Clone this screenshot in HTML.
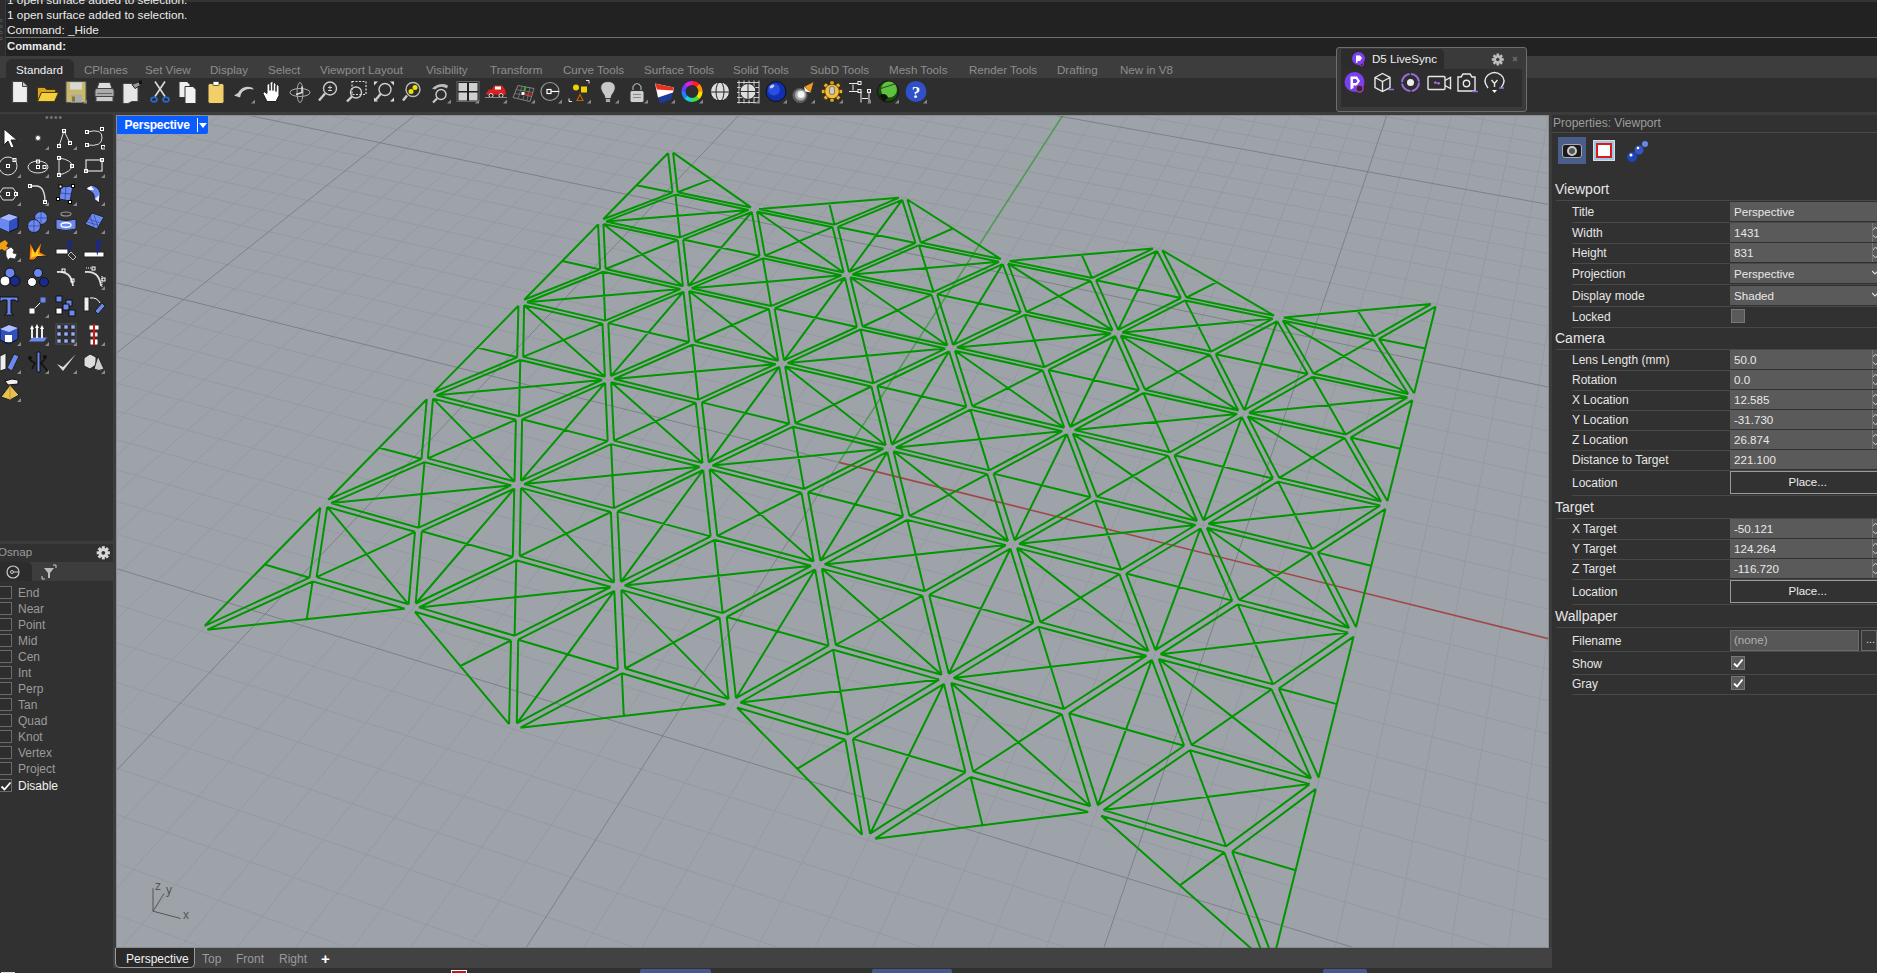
<!DOCTYPE html>
<html><head><meta charset="utf-8">
<style>
*{box-sizing:border-box;margin:0;padding:0}
html,body{width:1877px;height:973px;overflow:hidden;background:#313131;font-family:"Liberation Sans",sans-serif;position:relative}
.a{position:absolute}
.t{position:absolute;white-space:nowrap;line-height:1}
#cmd{left:0;top:0;width:1877px;height:56px;background:#222222}
#cmdstrip{left:0;top:0;width:5px;height:56px;background:#2c2c2c}
.cl{font-size:11.8px;color:#ececec;left:7px}
#tabrow{left:0;top:56px;width:1877px;height:22px;background:#3d3d3d}
#iconrow{left:0;top:78px;width:1877px;height:34px;background:#2e2e2e}
.tab{font-size:11.6px;color:#8e8e8e;top:63.5px}
#strip{left:0;top:112px;width:1877px;height:3px;background:#3c3c3c}
#lp{left:0;top:114px;width:113px;height:859px;background:#313131;border-top-right-radius:5px}
#rp{left:1552px;top:115px;width:325px;height:858px;background:#313131;border-top-left-radius:4px}
.pl{font-size:12px;color:#e6e6e6;left:1572px}
.ps{font-size:14px;color:#e6e6e6;left:1555px}
.pv{left:1730px;width:147px;height:18px;background:#5a5a5a}
.pvt{font-size:11.6px;color:#e8e8e8;left:1734px}
.sep{left:1572px;width:305px;height:1px;background:#484848}
.ssep{left:1556px;width:321px;height:1px;background:#484848}
.os{font-size:12px;color:#9b9b9b;left:18px}
.cb{left:-1px;width:13px;height:13px;border:1px solid #6b6b6b;background:#2e2e2e}
</style></head><body>
<!-- command area -->
<div class="a" id="cmd"></div>
<div class="a" id="cmdstrip"></div>
<div class="a" style="left:5px;top:0;width:1px;height:56px;background:#3a3a3a"></div>
<div class="a" style="left:6px;top:0;width:1871px;height:2px;background:#343434"></div>
<svg class="a" style="left:0;top:0" width="6" height="100"><g fill="none" stroke="#5e5e5e" stroke-width="0.8"><circle cx="1" cy="20.5" r="1.3"/><circle cx="1" cy="26.5" r="1.3"/><circle cx="1" cy="32.5" r="1.3"/><circle cx="1" cy="38.5" r="1.3"/><circle cx="1" cy="76.5" r="1.3"/><circle cx="1" cy="82.5" r="1.3"/><circle cx="1" cy="88.5" r="1.3"/><circle cx="1" cy="94.5" r="1.3"/></g></svg>
<div class="t cl" style="top:-4.8px">1 open surface added to selection.</div>
<div class="t cl" style="top:9.8px">1 open surface added to selection.</div>
<div class="t cl" style="top:24.8px">Command: _Hide</div>
<div class="a" style="left:6px;top:37px;width:1871px;height:1px;background:#707070"></div>
<div class="t cl" style="top:40.5px;font-weight:bold;font-size:11.3px">Command:</div>
<!-- tabs -->
<div class="a" id="tabrow"></div>
<div class="a" style="left:6px;top:59px;width:68px;height:19px;background:#2d2d2d;border-top-left-radius:6px;border-top-right-radius:6px"></div>
<div class="t tab" style="left:16px;color:#f0f0f0">Standard</div>
<div class="t tab" style="left:84px">CPlanes</div>
<div class="t tab" style="left:145px">Set View</div>
<div class="t tab" style="left:210px">Display</div>
<div class="t tab" style="left:268px">Select</div>
<div class="t tab" style="left:320px">Viewport Layout</div>
<div class="t tab" style="left:426px">Visibility</div>
<div class="t tab" style="left:490px">Transform</div>
<div class="t tab" style="left:563px">Curve Tools</div>
<div class="t tab" style="left:644px">Surface Tools</div>
<div class="t tab" style="left:733px">Solid Tools</div>
<div class="t tab" style="left:810px">SubD Tools</div>
<div class="t tab" style="left:889px">Mesh Tools</div>
<div class="t tab" style="left:969px">Render Tools</div>
<div class="t tab" style="left:1057px">Drafting</div>
<div class="t tab" style="left:1120px">New in V8</div>
<div class="a" id="iconrow"></div>
<svg class="a" style="left:0;top:78px" width="940" height="34"><g transform="translate(7.5,1.5)"><path d="M5 2H15L20 7V23H5Z" fill="#eee" stroke="#444" stroke-width="1.2"/><path d="M15 2V7H20" fill="#ccc" stroke="#444" stroke-width="1"/></g><g transform="translate(35.5,1.5)"><path d="M2 8H9L11 10H20V13H6L2 22Z" fill="#d9a520" stroke="#3a3000" stroke-width="0.8"/><path d="M6 13H23L19 22H2Z" fill="#f4cf40" stroke="#3a3000" stroke-width="0.8"/></g><g transform="translate(64,1.5)"><rect x="2" y="2" width="20" height="21" rx="1" fill="#c9b86a" stroke="#555" stroke-width="1"/><rect x="6" y="3" width="12" height="7" fill="#d8d8d8"/><rect x="7" y="15" width="11" height="8" fill="#aaa"/><rect x="8" y="17" width="3" height="5" fill="#8a7a30"/><path d="M19 24L23 20L23 24Z" fill="#8a8a8a"/></g><g transform="translate(92,1.5)"><path d="M7 3H18L20 9H5Z" fill="#ddd" stroke="#444"/><rect x="3" y="9" width="19" height="9" rx="2" fill="#aaa" stroke="#444"/><rect x="4" y="17" width="17" height="5" fill="#ccc" stroke="#444"/><path d="M5 14H20" stroke="#666"/></g><g transform="translate(120,1.5)"><path d="M3 4H15L18 7V22H12L8 24H3Z" fill="#e6e6e6" stroke="#444"/><path d="M12 5L20 2L22 5L15 9Z" fill="#999" stroke="#222"/><rect x="19" y="1" width="3" height="4" fill="#111"/></g><g transform="translate(148,1.5)"><path d="M7 2L17 17M17 2L7 17" stroke="#ddd" stroke-width="1.6"/><ellipse cx="6" cy="20" rx="3" ry="2.3" fill="none" stroke="#2a6ad8" stroke-width="1.6"/><ellipse cx="18" cy="20" rx="3" ry="2.3" fill="none" stroke="#2a6ad8" stroke-width="1.6"/></g><g transform="translate(176,1.5)"><path d="M3 2H11L14 5V18H3Z" fill="#eee" stroke="#333"/><path d="M9 7H17L20 10V24H9Z" fill="#f2f2f2" stroke="#333"/></g><g transform="translate(204,1.5)"><rect x="4" y="4" width="16" height="20" rx="2" fill="#f3cf6a" stroke="#333"/><rect x="9" y="2" width="6" height="4" rx="1" fill="#fff" stroke="#333" stroke-width="0.8"/></g><g transform="translate(232,1.5)"><path d="M6 14Q10 5 20 8L22 10Q13 8 9 14Z" fill="#ccc"/><path d="M2 16L10 11L8 18Z" fill="#ccc"/><path d="M19 24L23 20L23 24Z" fill="#8a8a8a"/></g><g transform="translate(260,1.5)"><path d="M7 22L3 14L4 12L7 14V5L9 4L10 5V11V3L12 2L13 3V11V4L15 3L16 5V12V6L18 5L19 7V16L16 22Z" fill="#fff" stroke="#222" stroke-width="1"/></g><g transform="translate(288,1.5)"><ellipse cx="12" cy="13" rx="10" ry="4" fill="none" stroke="#aaa" stroke-width="1"/><ellipse cx="12" cy="13" rx="3" ry="10" fill="none" stroke="#aaa" stroke-width="1"/><path d="M14 7L14 13L8 15" stroke="#ddd" stroke-width="1.6" fill="none"/></g><g transform="translate(316,1.5)"><circle cx="14" cy="9" r="6.5" fill="none" stroke="#ccc" stroke-width="1.4"/><path d="M9 14L3 21" stroke="#ccc" stroke-width="2.4"/><path d="M12 8H16M14 6V10M12 11H16" stroke="#ccc" stroke-width="1"/></g><g transform="translate(344,1.5)"><rect x="8" y="2" width="14" height="13" fill="none" stroke="#ddd" stroke-width="1.2" stroke-dasharray="2 1.5"/><circle cx="12" cy="13" r="5.5" fill="none" stroke="#ccc" stroke-width="1.4"/><path d="M8 17L3 22" stroke="#ccc" stroke-width="2.4"/></g><g transform="translate(372,1.5)"><path d="M2 2H6L2 6ZM22 2H18L22 6ZM2 22H6L2 18ZM22 22H18L22 18Z" fill="#ddd"/><circle cx="13" cy="10" r="6" fill="none" stroke="#ccc" stroke-width="1.4"/><path d="M9 14L4 20" stroke="#ccc" stroke-width="2.4"/></g><g transform="translate(400,1.5)"><circle cx="13" cy="10" r="7" fill="none" stroke="#bbb" stroke-width="1.4"/><circle cx="15" cy="8" r="2.5" fill="#f0e000"/><circle cx="11" cy="12" r="2.5" fill="#f0e000"/><path d="M7 16L3 21" stroke="#ccc" stroke-width="2.4"/></g><g transform="translate(428,1.5)"><path d="M4 9Q12 2 20 6L19 9Q12 5 7 10Z" fill="#bbb"/><circle cx="13" cy="15" r="5" fill="none" stroke="#ccc" stroke-width="1.4"/><path d="M9 19L5 23" stroke="#ccc" stroke-width="2.2"/><path d="M19 24L23 20L23 24Z" fill="#8a8a8a"/></g><g transform="translate(456,1.5)"><rect x="1" y="2" width="22" height="20" fill="#222" stroke="#666"/><rect x="2.5" y="3.5" width="8.5" height="8" fill="#d0d0d0"/><rect x="13" y="3.5" width="8.5" height="8" fill="#d0d0d0"/><rect x="2.5" y="13" width="8.5" height="8" fill="#d0d0d0"/><rect x="13" y="13" width="8.5" height="8" fill="#d0d0d0"/><path d="M19 24L23 20L23 24Z" fill="#8a8a8a"/></g><g transform="translate(484,1.5)"><path d="M2 14L5 10H8L10 6H18L21 10L22 15H2Z" fill="#e02020"/><rect x="11" y="7" width="6" height="3" fill="#fff"/><circle cx="7" cy="16" r="2" fill="#222" stroke="#fff" stroke-width="0.8"/><circle cx="17" cy="16" r="2" fill="#222" stroke="#fff" stroke-width="0.8"/><path d="M1 18H23" stroke="#888"/><path d="M19 24L23 20L23 24Z" fill="#8a8a8a"/></g><g transform="translate(512,1.5)"><path d="M6 6L22 9L18 22L1 18Z" fill="none" stroke="#999" stroke-width="0.8"/><path d="M10 7L6 19M14 7.5L11 20M18 8L15 21M4 10L21 13M3 14L20 17" stroke="#888" stroke-width="0.7"/><rect x="9" y="12" width="4" height="4" fill="#fff" stroke="#333"/><path d="M13 14L20 16" stroke="#e02020" stroke-width="1.4"/><path d="M12 12L13 7" stroke="#20c020" stroke-width="1.4"/><path d="M19 24L23 20L23 24Z" fill="#8a8a8a"/></g><g transform="translate(539,1.5)"><circle cx="11" cy="12" r="9" fill="none" stroke="#999" stroke-width="1.2"/><rect x="8" y="10" width="4" height="4" fill="none" stroke="#fff" stroke-width="1.2"/><path d="M12 12H20" stroke="#fff" stroke-width="1.2"/><path d="M19 24L23 20L23 24Z" fill="#8a8a8a"/></g><g transform="translate(568,1.5)"><circle cx="8" cy="8" r="3" fill="#f0d000"/><rect x="13" y="7" width="6" height="6" fill="#f0d000"/><path d="M9 21L12 15L15 21Z" fill="none" stroke="#c06000" stroke-width="1.2"/><path d="M18 1H21V4M1 19V22H4" stroke="#fff" stroke-width="0.9" fill="none"/><path d="M19 24L23 20L23 24Z" fill="#8a8a8a"/></g><g transform="translate(596,1.5)"><path d="M12 2C6 2 4 6 5 10C6 14 9 15 9 19H15C15 15 18 14 19 10C20 6 18 2 12 2Z" fill="#c8c8c8" stroke="#333"/><rect x="9.5" y="19" width="5" height="4" rx="1" fill="#aaa" stroke="#333"/><path d="M19 24L23 20L23 24Z" fill="#8a8a8a"/></g><g transform="translate(625,1.5)"><path d="M8 11V7Q12 1 16 7V11" fill="none" stroke="#333" stroke-width="2.5"/><path d="M8 11V7Q12 1 16 7V11" fill="none" stroke="#aaa" stroke-width="1.2"/><rect x="5" y="11" width="14" height="12" rx="2" fill="#d0d0d0" stroke="#333"/><path d="M8 15H16M8 18H16" stroke="#888"/><path d="M19 24L23 20L23 24Z" fill="#8a8a8a"/></g><g transform="translate(652,1.5)"><path d="M3 4L22 8L19 20L8 24Z" fill="#1e3a9a"/><path d="M3 4L22 8L21 13L6 18Z" fill="#ffffff"/><path d="M3 4L22 8L21 11L5 10Z" fill="#e83020"/><path d="M3 4L22 8L13 6Z" fill="#f08060"/><path d="M19 24L23 20L23 24Z" fill="#8a8a8a"/></g><g transform="translate(680,1.5)"><path d="M12.00 3.50A8.5 8.5 0 0 1 18.30 6.30" fill="none" stroke="#ff2020" stroke-width="4"/><path d="M18.01 5.99A8.5 8.5 0 0 1 20.49 12.42" fill="none" stroke="#ff9000" stroke-width="4"/><path d="M20.50 12.00A8.5 8.5 0 0 1 17.70 18.30" fill="none" stroke="#ffe000" stroke-width="4"/><path d="M18.01 18.01A8.5 8.5 0 0 1 11.58 20.49" fill="none" stroke="#40e040" stroke-width="4"/><path d="M12.00 20.50A8.5 8.5 0 0 1 5.70 17.70" fill="none" stroke="#20d0d0" stroke-width="4"/><path d="M5.99 18.01A8.5 8.5 0 0 1 3.51 11.58" fill="none" stroke="#2080ff" stroke-width="4"/><path d="M3.50 12.00A8.5 8.5 0 0 1 6.30 5.70" fill="none" stroke="#6040ff" stroke-width="4"/><path d="M5.99 5.99A8.5 8.5 0 0 1 12.42 3.51" fill="none" stroke="#e020e0" stroke-width="4"/><path d="M19 24L23 20L23 24Z" fill="#8a8a8a"/></g><g transform="translate(708,1.5)"><circle cx="12" cy="12" r="9.5" fill="#ddd" stroke="#222" stroke-width="1"/><ellipse cx="12" cy="12" rx="4" ry="9.5" fill="none" stroke="#222" stroke-width="1"/><path d="M2.5 12.5H21.5" stroke="#222"/></g><g transform="translate(736,1.5)"><path d="M1 3H23M1 8H23M1 13H23M1 18H23M1 23H23M3 1V24M8 1V24M13 1V24M18 1V24M23 1V24" stroke="#ddd" stroke-width="0.9"/><circle cx="12" cy="12" r="8" fill="#ddd" stroke="#222"/><path d="M4 12H20M12 4V20" stroke="#333"/><path d="M19 24L23 20L23 24Z" fill="#8a8a8a"/></g><g transform="translate(764,1.5)"><circle cx="12" cy="12" r="10" fill="#1030b0" stroke="#111"/><circle cx="10" cy="10" r="6" fill="#2850e0"/><ellipse cx="8" cy="7" rx="2.5" ry="1.5" fill="#cce" transform="rotate(-30 8 7)"/><path d="M19 24L23 20L23 24Z" fill="#8a8a8a"/></g><g transform="translate(792,1.5)"><circle cx="8" cy="16" r="7.5" fill="#bbb" opacity="0.35"/><circle cx="8.5" cy="15.5" r="5.5" fill="#ddd" opacity="0.6"/><circle cx="9" cy="15" r="3.5" fill="#f4f4f4"/><path d="M12 7L22 2L19 13Z" fill="#f09a20" stroke="#2a2a2a" stroke-width="0.8"/><path d="M12 7L19 13L13 12Z" fill="#fff2d0"/><path d="M19 24L23 20L23 24Z" fill="#8a8a8a"/></g><g transform="translate(820,1.5)"><g transform="translate(12 12)"><rect x="-2" y="-10.5" width="4" height="4.5" rx="0.8" fill="#e8b030" stroke="#3a2a00" stroke-width="0.7" transform="rotate(0)"/><rect x="-2" y="-10.5" width="4" height="4.5" rx="0.8" fill="#e8b030" stroke="#3a2a00" stroke-width="0.7" transform="rotate(45)"/><rect x="-2" y="-10.5" width="4" height="4.5" rx="0.8" fill="#e8b030" stroke="#3a2a00" stroke-width="0.7" transform="rotate(90)"/><rect x="-2" y="-10.5" width="4" height="4.5" rx="0.8" fill="#e8b030" stroke="#3a2a00" stroke-width="0.7" transform="rotate(135)"/><rect x="-2" y="-10.5" width="4" height="4.5" rx="0.8" fill="#e8b030" stroke="#3a2a00" stroke-width="0.7" transform="rotate(180)"/><rect x="-2" y="-10.5" width="4" height="4.5" rx="0.8" fill="#e8b030" stroke="#3a2a00" stroke-width="0.7" transform="rotate(225)"/><rect x="-2" y="-10.5" width="4" height="4.5" rx="0.8" fill="#e8b030" stroke="#3a2a00" stroke-width="0.7" transform="rotate(270)"/><rect x="-2" y="-10.5" width="4" height="4.5" rx="0.8" fill="#e8b030" stroke="#3a2a00" stroke-width="0.7" transform="rotate(315)"/><circle r="7.3" fill="#e8b030" stroke="#3a2a00" stroke-width="0.7"/><circle r="6.3" fill="#f0c040"/><rect x="-2.5" y="-5" width="5" height="8" rx="2" fill="#c8c8c8" stroke="#444" stroke-width="0.6"/></g><path d="M19 24L23 20L23 24Z" fill="#8a8a8a"/></g><g transform="translate(848,1.5)"><path d="M1 4H10M1 12H10M5 5V11M13 12V23M21 12V23M14 19H20" stroke="#eee" stroke-width="1"/><rect x="10" y="2" width="3" height="3" fill="none" stroke="#eee"/><rect x="10" y="10" width="3" height="3" fill="none" stroke="#eee"/><rect x="19.5" y="10" width="3" height="3" fill="none" stroke="#eee"/><path d="M19 24L23 20L23 24Z" fill="#8a8a8a"/></g><g transform="translate(876,1.5)"><circle cx="12" cy="12" r="10.5" fill="#1a4a10" stroke="#111"/><circle cx="13" cy="10" r="8" fill="#60c040"/><path d="M3 16Q10 12 12 18L8 22Z" fill="#111"/><path d="M5 9L20 4" stroke="#222" stroke-width="0.8"/><path d="M19 24L23 20L23 24Z" fill="#8a8a8a"/></g><g transform="translate(904,1.5)"><circle cx="12" cy="12" r="10.5" fill="#3050c8"/><text x="12" y="18" font-size="17" font-weight="bold" fill="#fff" text-anchor="middle" font-family="Liberation Serif">?</text><path d="M19 24L23 20L23 24Z" fill="#8a8a8a"/></g></svg>
<!-- left panel -->
<div class="a" id="strip"></div>
<div class="a" id="lp"></div>
<div class="t" style="left:45px;top:113px;font-size:10px;color:#777;letter-spacing:1px">&#8226;&#8226;&#8226;&#8226;</div><svg class="a" style="left:0;top:124px" width="113" height="285"><g transform="translate(-2,2)"><path d="M6 3L6 19L10 15L13 22L16 21L13 14L19 14Z" fill="#fff" stroke="#222" stroke-width="1"/></g><g transform="translate(26,2)"><circle cx="12" cy="12" r="2.6" fill="#fff" stroke="#555" stroke-width="1.2"/><path d="M19 24L23 20L23 24Z" fill="#8a8a8a"/></g><g transform="translate(54,2)"><path d="M5 20L10 5L16 17" fill="none" stroke="#ddd" stroke-width="1"/><rect x="3.5" y="18.5" width="3" height="3" fill="none" stroke="#fff"/><rect x="8.5" y="3.5" width="3" height="3" fill="none" stroke="#fff"/><rect x="14.5" y="15.5" width="3" height="3" fill="none" stroke="#fff"/><path d="M19 24L23 20L23 24Z" fill="#8a8a8a"/></g><g transform="translate(82,2)"><path d="M5 6Q21 2 20 12Q20 21 5 19" fill="none" stroke="#ddd" stroke-width="1"/><rect x="3.5" y="4.5" width="3" height="3" fill="none" stroke="#fff"/><rect x="18.5" y="1.5" width="3" height="3" fill="none" stroke="#fff"/><rect x="3.5" y="17.5" width="3" height="3" fill="none" stroke="#fff"/><rect x="19.5" y="19.5" width="3" height="3" fill="none" stroke="#fff"/><path d="M19 24L23 20L23 24Z" fill="#8a8a8a"/></g><g transform="translate(-2,30)"><circle cx="10" cy="12" r="9" fill="none" stroke="#ddd" stroke-width="1"/><rect x="8.5" y="10.5" width="3" height="3" fill="none" stroke="#fff"/><rect x="15" y="4.5" width="3" height="3" fill="none" stroke="#fff"/><path d="M19 24L23 20L23 24Z" fill="#8a8a8a"/></g><g transform="translate(26,30)"><ellipse cx="12" cy="13" rx="10" ry="6" fill="none" stroke="#ddd" stroke-width="1"/><rect x="10.5" y="6" width="3" height="3" fill="none" stroke="#fff"/><rect x="10.5" y="11.5" width="3" height="3" fill="none" stroke="#fff"/><rect x="17" y="11.5" width="3" height="3" fill="none" stroke="#fff"/><path d="M19 24L23 20L23 24Z" fill="#8a8a8a"/></g><g transform="translate(54,30)"><path d="M5 4Q18 6 18 12Q17 18 5 21Z" fill="none" stroke="#ddd" stroke-width="1"/><rect x="3.5" y="2.5" width="3" height="3" fill="none" stroke="#fff"/><rect x="16.5" y="10.5" width="3" height="3" fill="none" stroke="#fff"/><rect x="3.5" y="19.5" width="3" height="3" fill="none" stroke="#fff"/><path d="M19 24L23 20L23 24Z" fill="#8a8a8a"/></g><g transform="translate(82,30)"><rect x="4" y="6" width="16" height="11" fill="none" stroke="#ddd" stroke-width="1.2"/><rect x="2.5" y="15.5" width="3" height="3" fill="none" stroke="#fff"/><rect x="18.5" y="4.5" width="3" height="3" fill="none" stroke="#fff"/><path d="M19 24L23 20L23 24Z" fill="#8a8a8a"/></g><g transform="translate(-2,58)"><path d="M5 6H15L19 12L15 18H5L1 12Z" fill="none" stroke="#ddd" stroke-width="1"/><rect x="8.5" y="10.5" width="3" height="3" fill="none" stroke="#fff"/><rect x="16.5" y="10.5" width="3" height="3" fill="none" stroke="#fff"/><path d="M19 24L23 20L23 24Z" fill="#8a8a8a"/></g><g transform="translate(26,58)"><path d="M4 4H11Q19 5 19 20" fill="none" stroke="#ddd" stroke-width="1.4"/><rect x="2.5" y="2.5" width="3" height="3" fill="none" stroke="#fff"/><rect x="17.5" y="18.5" width="3" height="3" fill="none" stroke="#fff"/><path d="M19 24L23 20L23 24Z" fill="#8a8a8a"/></g><g transform="translate(54,58)"><path d="M7 5L19 4L16 19L5 17Z" fill="#6a88f0" stroke="#222"/><path d="M12 5L11 18M6 11L17 12" stroke="#2a3a90" stroke-width="0.7"/><rect x="5" y="3" width="3" height="3" fill="#fff" stroke="#000"/><rect x="17.5" y="2.5" width="3" height="3" fill="#fff" stroke="#000"/><rect x="2.5" y="15.5" width="3" height="3" fill="#fff" stroke="#000"/><rect x="14.5" y="18.5" width="3" height="3" fill="#fff" stroke="#000"/><path d="M19 24L23 20L23 24Z" fill="#8a8a8a"/></g><g transform="translate(82,58)"><path d="M3 7L10 3Q20 7 18 15L17 21L12 17Q14 10 3 7Z" fill="#6a88f0" stroke="#222"/><path d="M5 6L9 4L12 8L7 8Z" fill="#fff"/><path d="M13 17L17 13L17 20Z" fill="#eee"/><path d="M19 24L23 20L23 24Z" fill="#8a8a8a"/></g><g transform="translate(-2,86)"><path d="M2 8L11 4L20 7L20 18L11 22L2 18Z" fill="#3050c0" stroke="#111"/><path d="M2 8L11 4L20 7L11 11Z" fill="#a8b8ff"/><path d="M2 8L11 11L11 22L2 18Z" fill="#6a88f0"/><path d="M19 24L23 20L23 24Z" fill="#8a8a8a"/></g><g transform="translate(26,86)"><circle cx="15" cy="8" r="6.5" fill="#6a88f0" stroke="#222"/><circle cx="8" cy="16" r="6.5" fill="#6a88f0" stroke="#222"/><path d="M15 2V14M9 8H21M8 10V22M2 16H14" stroke="#2a3a90" stroke-width="0.6"/><path d="M19 24L23 20L23 24Z" fill="#8a8a8a"/></g><g transform="translate(54,86)"><ellipse cx="12" cy="4" rx="5" ry="2" fill="none" stroke="#999" stroke-width="1.2"/><path d="M2 9Q12 12 22 9V19Q12 22 2 19Z" fill="#6a88f0" stroke="#222"/><ellipse cx="12" cy="15" rx="5" ry="2.2" fill="none" stroke="#fff" stroke-width="1.4"/><path d="M19 24L23 20L23 24Z" fill="#8a8a8a"/></g><g transform="translate(82,86)"><path d="M3 14L10 3L22 7L15 19Z" fill="#6a88f0" stroke="#222"/><path d="M6 9L18 13M8 6L12 17M12 5L16 17M5 12L16 15" stroke="#2a3a90" stroke-width="0.6"/><path d="M19 24L23 20L23 24Z" fill="#8a8a8a"/></g><g transform="translate(-2,114)"><path d="M2 5L7 2L10 5L8 8L11 10L7 13L4 11L1 12Z" fill="#f0a010"/><path d="M8 12L13 9L16 12L15 15L19 16L17 21L12 20L10 22L8 18Z" fill="#fff" stroke="#333" stroke-width="0.8"/><path d="M19 24L23 20L23 24Z" fill="#8a8a8a"/></g><g transform="translate(26,114)"><path d="M3 22L4 4L9 14L16 3L14 14L22 18L12 18L8 22Z" fill="#f08010" stroke="#222" stroke-width="0.8"/><path d="M5 20L6 10L9 16L13 9L12 16L18 18L10 18Z" fill="#ffd020"/></g><g transform="translate(54,114)"><rect x="2" y="11" width="12" height="5" fill="#fff" stroke="#222"/><path d="M13 3H19L14 15Z" fill="#1a2a8a"/><path d="M14 17L17 14L22 19L19 22Z" fill="none" stroke="#bbb"/></g><g transform="translate(82,114)"><rect x="2" y="14" width="20" height="5" fill="#fff" stroke="#222"/><path d="M14 3H20L15 18Z" fill="#1a2a8a"/></g><g transform="translate(-2,142)"><circle cx="12" cy="7" r="5" fill="#6a88f0" stroke="#111"/><circle cx="7" cy="15" r="5" fill="#fff" stroke="#111"/><circle cx="17" cy="15" r="5" fill="#1a2a8a" stroke="#111"/></g><g transform="translate(26,142)"><circle cx="12" cy="7" r="4.5" fill="#6a88f0" stroke="#111"/><circle cx="6" cy="16" r="4.5" fill="#fff" stroke="#111"/><circle cx="18" cy="16" r="4.5" fill="#1a2a8a" stroke="#111"/></g><g transform="translate(54,142)"><path d="M3 6Q17 4 19 20" fill="none" stroke="#ddd" stroke-width="1.8"/><rect x="8" y="3" width="3" height="3" fill="none" stroke="#fff"/><rect x="17" y="13" width="3" height="3" fill="none" stroke="#fff"/></g><g transform="translate(82,142)"><path d="M3 6Q17 4 19 20" fill="none" stroke="#ddd" stroke-width="1.8"/><path d="M4 2H10M20 10V22" stroke="#fff" stroke-dasharray="1 1"/><rect x="10" y="1" width="3" height="3" fill="none" stroke="#fff"/><rect x="20" y="12" width="3" height="3" fill="none" stroke="#fff"/><path d="M19 24L23 20L23 24Z" fill="#8a8a8a"/></g><g transform="translate(-2,170)"><path d="M2 3H20V8L17 6H13V19L16 21H6L9 19V6H5L2 8Z" fill="#6a88f0" stroke="#111"/></g><g transform="translate(26,170)"><rect x="3" y="14" width="6" height="6" fill="#fff" stroke="#333"/><rect x="14" y="3" width="6" height="6" fill="#6a88f0" stroke="#333"/><path d="M9 14L14 9" stroke="#fff"/><path d="M19 24L23 20L23 24Z" fill="#8a8a8a"/></g><g transform="translate(54,170)"><rect x="2" y="2" width="6" height="6" fill="#6a88f0" stroke="#111"/><rect x="12" y="6" width="6" height="6" fill="#6a88f0" stroke="#111"/><rect x="9" y="10" width="6" height="6" fill="#6a88f0" stroke="#111"/><rect x="2" y="14" width="6" height="6" fill="#fff" stroke="#111"/><rect x="15" y="16" width="6" height="6" fill="#6a88f0" stroke="#111"/></g><g transform="translate(82,170)"><rect x="2" y="3" width="5" height="14" fill="#eee" stroke="#222"/><path d="M13 17L20 9L23 12L16 20Z" fill="#6a88f0" stroke="#222"/><path d="M8 4Q15 3 18 9" fill="none" stroke="#fff"/></g><g transform="translate(-2,198)"><path d="M2 7L11 3L20 6V17L11 22L2 18Z" fill="#3050c0" stroke="#111"/><path d="M2 7L11 3L20 6L11 10Z" fill="#b0c0ff"/><rect x="7" y="13" width="7" height="7" fill="#fff"/><path d="M19 24L23 20L23 24Z" fill="#8a8a8a"/></g><g transform="translate(26,198)"><path d="M2 20L6 15H22L18 20Z" fill="#6a88f0" stroke="#333"/><path d="M6 16V5M11 16V4M16 16V5" stroke="#fff" stroke-width="1.8"/><path d="M4 7L6 3L8 7ZM9 6L11 2L13 6ZM14 7L16 3L18 7Z" fill="#fff"/><path d="M19 24L23 20L23 24Z" fill="#8a8a8a"/></g><g transform="translate(54,198)"><rect x="2" y="2" width="20" height="20" fill="none" stroke="#555"/><rect x="3" y="3" width="4" height="4" fill="#9ab0ff" stroke="#222" stroke-width="0.6"/><rect x="3" y="10" width="4" height="4" fill="#9ab0ff" stroke="#222" stroke-width="0.6"/><rect x="3" y="17" width="4" height="4" fill="#9ab0ff" stroke="#222" stroke-width="0.6"/><rect x="10" y="3" width="4" height="4" fill="#9ab0ff" stroke="#222" stroke-width="0.6"/><rect x="10" y="10" width="4" height="4" fill="#9ab0ff" stroke="#222" stroke-width="0.6"/><rect x="10" y="17" width="4" height="4" fill="#9ab0ff" stroke="#222" stroke-width="0.6"/><rect x="17" y="3" width="4" height="4" fill="#9ab0ff" stroke="#222" stroke-width="0.6"/><rect x="17" y="10" width="4" height="4" fill="#9ab0ff" stroke="#222" stroke-width="0.6"/><rect x="17" y="17" width="4" height="4" fill="#9ab0ff" stroke="#222" stroke-width="0.6"/><path d="M19 24L23 20L23 24Z" fill="#8a8a8a"/></g><g transform="translate(82,198)"><rect x="7" y="3" width="10" height="5" fill="#fff" stroke="#333"/><rect x="8" y="10" width="8" height="5" fill="#eee" stroke="#333"/><rect x="8" y="17" width="8" height="6" fill="#fff" stroke="#333"/><path d="M12 2V23" stroke="#e01010" stroke-width="2"/><path d="M19 24L23 20L23 24Z" fill="#8a8a8a"/></g><g transform="translate(-2,226)"><path d="M2 6L8 3V19L2 21Z" fill="#eee" stroke="#222"/><path d="M9 18L16 4L21 6L14 21Z" fill="#6a88f0" stroke="#222"/><path d="M19 24L23 20L23 24Z" fill="#8a8a8a"/></g><g transform="translate(26,226)"><path d="M11 2V22H14V2Z" fill="#6a88f0" stroke="#111"/><circle cx="4" cy="8" r="2" fill="#111"/><circle cx="19" cy="7" r="2" fill="#111"/><path d="M4 10L9 13L6 19M19 9L15 13L20 19L22 22" fill="none" stroke="#111" stroke-width="1.6"/><path d="M19 24L23 20L23 24Z" fill="#8a8a8a"/></g><g transform="translate(54,226)"><path d="M3 14L9 21L22 4L9 17Z" fill="#ddd"/><path d="M19 24L23 20L23 24Z" fill="#8a8a8a"/></g><g transform="translate(82,226)"><path d="M2 8L8 4L14 7V15L8 19L2 16Z" fill="#ddd" stroke="#222"/><path d="M16 6L22 19Q17 22 12 19Z" fill="#ccc" stroke="#222"/><path d="M19 24L23 20L23 24Z" fill="#8a8a8a"/></g><g transform="translate(-2,254)"><path d="M3 19L12 7L21 17L12 22Z" fill="#e8c050" stroke="#222"/><path d="M12 7L12 22" stroke="#b89030"/><path d="M7 3L14 1L20 2V6L10 7Z" fill="#eee" stroke="#111"/><path d="M19 24L23 20L23 24Z" fill="#8a8a8a"/></g></svg>
<!-- viewport -->
<div class="a" style="left:113px;top:112px;width:1439px;height:856px;background:#3c3c3c"></div>
<svg width="1433" height="833" viewBox="116 115 1433 833" style="position:absolute;left:116px;top:115px;display:block">
<rect x="116" y="115" width="1433" height="833" fill="#9ea3aa"/>
<path d="M-222430.5 60238.3L169.6 -516.4M-115853.0 30885.0L-218229.6 60238.3M-220564.6 60238.3L179.6 -515.5M-84276.9 22338.0L-213587.8 60238.3M-218698.7 60238.3L189.7 -514.7M-66068.1 17409.2L-208946.0 60238.3M-216832.8 60238.3L199.8 -513.8M-54221.2 14202.5L-204304.3 60238.3M-214966.9 60238.3L209.9 -512.9M-45897.9 11949.6L-199662.5 60238.3M-213101.0 60238.3L220.1 -512.0M-39729.6 10280.0L-195020.7 60238.3M-211235.1 60238.3L230.3 -511.2M-34975.4 8993.1L-190378.9 60238.3M-209369.3 60238.3L240.5 -510.3M-31199.0 7970.9L-185737.2 60238.3M-207503.4 60238.3L250.8 -509.4M-28126.8 7139.3L-181095.4 60238.3M-203771.6 60238.3L271.5 -507.6M-23431.1 5868.3L-171811.8 60238.3M-201905.7 60238.3L281.9 -506.7M-21596.5 5371.7L-167170.0 60238.3M-200039.8 60238.3L292.4 -505.8M-20011.1 4942.6L-162528.3 60238.3M-198173.9 60238.3L302.9 -504.9M-18627.3 4568.0L-157886.5 60238.3M-196308.1 60238.3L313.4 -504.0M-17409.0 4238.2L-153244.7 60238.3M-194442.2 60238.3L324.0 -503.1M-16328.2 3945.7L-148602.9 60238.3M-192576.3 60238.3L334.7 -502.2M-15362.8 3684.4L-143961.2 60238.3M-190710.4 60238.3L345.3 -501.2M-14495.3 3449.6L-139319.4 60238.3M-188844.5 60238.3L356.1 -500.3M-13711.5 3237.4L-134677.6 60238.3M-185112.7 60238.3L377.6 -498.5M-12350.9 2869.1L-125394.1 60238.3M-183246.8 60238.3L388.5 -497.5M-11756.7 2708.3L-120752.3 60238.3M-181381.0 60238.3L399.4 -496.6M-11210.5 2560.4L-116110.5 60238.3M-179515.1 60238.3L410.3 -495.6M-10706.7 2424.1L-111468.7 60238.3M-177649.2 60238.3L421.3 -494.7M-10240.7 2297.9L-106827.0 60238.3M-175783.3 60238.3L432.4 -493.7M-9808.3 2180.9L-102185.2 60238.3M-173917.4 60238.3L443.5 -492.8M-9405.9 2072.0L-97543.4 60238.3M-172051.5 60238.3L454.6 -491.8M-9030.7 1970.4L-92901.6 60238.3M-170185.6 60238.3L465.8 -490.9M-8679.9 1875.4L-88259.9 60238.3M-166453.9 60238.3L488.3 -488.9M-8042.6 1702.9L-78976.3 60238.3M-164588.0 60238.3L499.6 -488.0M-7752.3 1624.4L-74334.5 60238.3M-162722.1 60238.3L511.0 -487.0M-7478.7 1550.3L-69692.8 60238.3M-160856.2 60238.3L522.4 -486.0M-7220.4 1480.4L-65051.0 60238.3M-158990.3 60238.3L533.8 -485.0M-6976.2 1414.3L-60409.2 60238.3M-157124.4 60238.3L545.4 -484.0M-6744.9 1351.7L-55767.4 60238.3M-155258.5 60238.3L556.9 -483.0M-6525.6 1292.3L-51125.6 60238.3M-153392.6 60238.3L568.5 -482.0M-6317.4 1236.0L-46483.9 60238.3M-151526.8 60238.3L580.2 -481.0M-6119.3 1182.3L-41842.1 60238.3M-147795.0 60238.3L603.7 -479.0M-5751.0 1082.7L-32558.5 60238.3M-145929.1 60238.3L615.5 -478.0M-5579.5 1036.2L-27916.8 60238.3M-144063.2 60238.3L627.4 -476.9M-5415.7 991.9L-23275.0 60238.3M-142197.3 60238.3L639.3 -475.9M-5259.0 949.5L-18633.2 60238.3M-140331.4 60238.3L651.3 -474.9M-5109.1 908.9L-13991.4 60238.3M-138465.5 60238.3L663.3 -473.9M-4965.4 870.0L-9349.7 60238.3M-136599.7 60238.3L675.4 -472.8M-4827.6 832.7L-4707.9 60238.3M-134733.8 60238.3L687.5 -471.8M-4695.4 796.9L-66.1 60238.3M-132867.9 60238.3L699.7 -470.7M-4568.3 762.5L4575.7 60238.3M-129136.1 60238.3L724.2 -468.6M-4328.7 697.7L13859.2 60238.3M-127270.2 60238.3L736.6 -467.5M-4215.6 667.1L18501.0 60238.3M-125404.3 60238.3L749.0 -466.5M-4106.7 637.6L23142.8 60238.3M-123538.5 60238.3L761.5 -465.4M-4001.6 609.1L27784.5 60238.3M-121672.6 60238.3L774.0 -464.3M-3900.2 581.7L32426.3 60238.3M-119806.7 60238.3L786.6 -463.2M-3802.4 555.2L37068.1 60238.3M-117940.8 60238.3L799.2 -462.1M-3707.9 529.6L41709.9 60238.3M-116074.9 60238.3L811.9 -461.1M-3616.5 504.9L46351.6 60238.3M-114209.0 60238.3L824.6 -460.0M-3528.2 481.0L50993.4 60238.3M-110477.2 60238.3L850.3 -457.7M-3360.0 435.5L60277.0 60238.3M-108611.4 60238.3L863.2 -456.6M-3279.8 413.8L64918.8 60238.3M-106745.5 60238.3L876.2 -455.5M-3202.1 392.7L69560.5 60238.3M-104879.6 60238.3L889.2 -454.4M-3126.8 372.3L74202.3 60238.3M-103013.7 60238.3L902.3 -453.3M-3053.8 352.6L78844.1 60238.3M-101147.8 60238.3L915.4 -452.1M-2982.9 333.4L83485.9 60238.3M-99281.9 60238.3L928.7 -451.0M-2914.0 314.7L88127.6 60238.3M-97416.0 60238.3L941.9 -449.9M-2847.2 296.6L92769.4 60238.3M-95550.1 60238.3L955.3 -448.7M-2782.2 279.1L97411.2 60238.3M-91818.4 60238.3L982.1 -446.4M-2657.6 245.3L106694.7 60238.3M-89952.5 60238.3L995.7 -445.2M-2597.8 229.2L111336.5 60238.3M-88086.6 60238.3L1009.3 -444.1M-2539.7 213.4L115978.3 60238.3M-86220.7 60238.3L1022.9 -442.9M-2483.1 198.1L120620.1 60238.3M-84354.8 60238.3L1036.6 -441.7M-2427.9 183.2L125261.8 60238.3M-82488.9 60238.3L1050.4 -440.5M-2374.2 168.6L129903.6 60238.3M-80623.0 60238.3L1064.2 -439.3M-2321.8 154.5L134545.4 60238.3M-78757.2 60238.3L1078.2 -438.1M-2270.8 140.6L139187.2 60238.3M-76891.3 60238.3L1092.1 -436.9M-2221.0 127.2L143828.9 60238.3M-73159.5 60238.3L1120.3 -434.5M-2125.0 101.2L91290.6 36289.3M-71293.6 60238.3L1134.5 -433.3M-2078.8 88.7L64392.5 25103.7M-69427.7 60238.3L1148.7 -432.0M-2033.6 76.4L49921.5 19085.9M-67561.8 60238.3L1163.0 -430.8M-1989.5 64.5L40881.5 15326.6M-65695.9 60238.3L1177.4 -429.6M-1946.4 52.8L34698.2 12755.3M-63830.1 60238.3L1191.8 -428.3M-1904.3 41.4L30202.3 10885.7M-61964.2 60238.3L1206.4 -427.1M-1863.1 30.3L26786.0 9465.0M-60098.3 60238.3L1221.0 -425.8M-1822.9 19.4L24102.1 8348.9M-58232.4 60238.3L1235.6 -424.6M-1783.5 8.7L21937.9 7448.9M-54500.6 60238.3L1265.1 -422.0M-1707.4 -11.9L18662.7 6086.9M-52634.7 60238.3L1280.0 -420.7M-1670.5 -21.9L17393.6 5559.2M-50768.9 60238.3L1295.0 -419.4M-1634.4 -31.6L16301.7 5105.1M-48903.0 60238.3L1310.0 -418.1M-1599.1 -41.2L15352.3 4710.3M-47037.1 60238.3L1325.1 -416.8M-1564.5 -50.6L14519.2 4363.8M-45171.2 60238.3L1340.3 -415.5M-1530.6 -59.7L13782.2 4057.3M-43305.3 60238.3L1355.5 -414.2M-1497.4 -68.7L13125.6 3784.3M-41439.4 60238.3L1370.8 -412.9M-1464.8 -77.5L12537.0 3539.5M-39573.5 60238.3L1386.2 -411.6M-1432.9 -86.2L12006.2 3318.8M-35841.8 60238.3L1417.2 -408.9M-1371.0 -102.9L11087.4 2936.7M-33975.9 60238.3L1432.9 -407.6M-1340.9 -111.1L10687.1 2770.2M-32110.0 60238.3L1448.6 -406.2M-1311.4 -119.0L10319.6 2617.4M-30244.1 60238.3L1464.4 -404.9M-1282.5 -126.9L9981.2 2476.7M-28378.2 60238.3L1480.2 -403.5M-1254.1 -134.6L9668.5 2346.7M-26512.3 60238.3L1496.2 -402.1M-1226.2 -142.1L9378.7 2226.1M-24646.4 60238.3L1512.2 -400.7M-1198.9 -149.5L9109.3 2114.1M-22780.5 60238.3L1528.3 -399.3M-1172.0 -156.8L8858.3 2009.7M-20914.7 60238.3L1544.5 -397.9M-1145.7 -163.9L8623.9 1912.2M-17182.9 60238.3L1577.1 -395.1M-1094.3 -177.8L8198.5 1735.4M-15317.0 60238.3L1593.6 -393.7M-1069.3 -184.6L8005.0 1654.9M-13451.1 60238.3L1610.1 -392.3M-1044.8 -191.2L7822.7 1579.1M-11585.2 60238.3L1626.7 -390.9M-1020.6 -197.8L7650.7 1507.6M-9719.3 60238.3L1643.4 -389.4M-996.9 -204.2L7488.3 1440.0M-7853.4 60238.3L1660.2 -388.0M-973.6 -210.5L7334.5 1376.0M-5987.6 60238.3L1677.0 -386.5M-950.7 -216.7L7188.7 1315.4M-4121.7 60238.3L1694.0 -385.1M-928.1 -222.8L7050.4 1257.9M-2255.8 60238.3L1711.0 -383.6M-906.0 -228.8L6918.9 1203.2M1476.0 60238.3L1745.4 -380.6M-862.7 -240.5L6674.6 1101.6M3341.9 60238.3L1762.7 -379.2M-841.6 -246.2L6560.9 1054.3M5207.8 60238.3L1780.1 -377.7M-820.9 -251.8L6452.3 1009.2M7073.7 60238.3L1797.6 -376.1M-800.4 -257.4L6348.5 966.0M8939.5 60238.3L1815.2 -374.6M-780.3 -262.8L6249.2 924.7M10805.4 60238.3L1832.9 -373.1M-760.5 -268.2L6154.1 885.2M12671.3 60238.3L1850.7 -371.6M-741.0 -273.4L6062.9 847.3M14537.2 60238.3L1868.5 -370.0M-721.9 -278.6L5975.5 810.9M16403.1 60238.3L1886.5 -368.5M-703.0 -283.7L5891.5 776.0M20134.9 60238.3L1922.7 -365.4M-666.0 -293.7L5733.1 710.1M22000.7 60238.3L1941.0 -363.8M-648.0 -298.6L5658.4 679.0M23866.6 60238.3L1959.4 -362.2M-630.2 -303.4L5586.4 649.1M25732.5 60238.3L1977.8 -360.6M-612.7 -308.2L5517.0 620.3M27598.4 60238.3L1996.4 -359.0M-595.4 -312.9L5450.1 592.4M29464.3 60238.3L2015.0 -357.4M-578.4 -317.5L5385.5 565.6M31330.2 60238.3L2033.8 -355.8M-561.6 -322.0L5323.2 539.6M33196.1 60238.3L2052.7 -354.2M-545.1 -326.5L5262.9 514.6M35062.0 60238.3L2071.6 -352.5M-528.8 -330.9L5204.6 490.3M38793.7 60238.3L2109.9 -349.2M-496.9 -339.5L5093.7 444.2M40659.6 60238.3L2129.2 -347.6M-481.3 -343.7L5040.9 422.3M42525.5 60238.3L2148.6 -345.9M-465.9 -347.9L4989.7 401.0M44391.4 60238.3L2168.1 -344.2M-450.7 -352.0L4940.1 380.3M46257.3 60238.3L2187.7 -342.5M-435.7 -356.1L4892.0 360.3M48123.2 60238.3L2207.4 -340.8M-420.9 -360.1L4845.3 340.9M49989.1 60238.3L2227.3 -339.1M-406.3 -364.0L4799.9 322.0M51854.9 60238.3L2247.2 -337.4M-391.9 -367.9L4755.9 303.7M53720.8 60238.3L2267.3 -335.7M-377.7 -371.8L4713.1 286.0M57452.6 60238.3L2307.8 -332.2M-349.9 -379.3L4631.1 251.9M59318.5 60238.3L2328.2 -330.4M-336.3 -383.0L4591.8 235.5M61184.4 60238.3L2348.7 -328.7M-322.8 -386.6L4553.6 219.6M63050.3 60238.3L2369.3 -326.9M-309.5 -390.2L4516.3 204.1M64916.2 60238.3L2390.1 -325.1M-296.4 -393.8L4480.0 189.0M66782.0 60238.3L2411.0 -323.3M-283.4 -397.3L4444.7 174.3M68647.9 60238.3L2432.0 -321.5M-270.6 -400.8L4410.3 160.0M70513.8 60238.3L2453.1 -319.7M-258.0 -404.2L4376.7 146.1M72379.7 60238.3L2474.3 -317.9M-245.5 -407.6L4344.0 132.4M76111.5 60238.3L2517.2 -314.2M-221.0 -414.2L4280.9 106.2M77977.4 60238.3L2538.8 -312.3M-209.0 -417.5L4250.5 93.6M79843.3 60238.3L2560.6 -310.4M-197.1 -420.7L4220.9 81.2M81709.1 60238.3L2582.5 -308.5M-185.4 -423.8L4191.9 69.2M83575.0 60238.3L2604.5 -306.6M-173.8 -427.0L4163.6 57.4M85440.9 60238.3L2626.6 -304.7M-162.3 -430.1L4135.9 45.9M87306.8 60238.3L2648.9 -302.8M-151.0 -433.2L4108.9 34.7M89172.7 60238.3L2671.3 -300.9M-139.8 -436.2L4082.4 23.7M91038.6 60238.3L2693.8 -298.9M-128.7 -439.2L4056.6 12.9M94770.3 60238.3L2739.3 -295.0M-107.0 -445.1L4006.6 -7.9M96636.2 60238.3L2762.3 -293.1M-96.3 -447.9L3982.4 -17.9M98502.1 60238.3L2785.4 -291.1M-85.8 -450.8L3958.7 -27.8M100368.0 60238.3L2808.6 -289.1M-75.3 -453.6L3935.5 -37.4M102233.9 60238.3L2832.0 -287.0M-65.0 -456.4L3912.8 -46.9M104099.8 60238.3L2855.5 -285.0M-54.8 -459.2L3890.5 -56.1M105965.7 60238.3L2879.2 -283.0M-44.7 -461.9L3868.8 -65.2M107831.6 60238.3L2903.0 -280.9M-34.8 -464.6L3847.4 -74.1M109697.4 60238.3L2926.9 -278.9M-24.9 -467.3L3826.5 -82.8M113429.2 60238.3L2975.3 -274.7M-5.5 -472.5L3785.9 -99.7M115295.1 60238.3L2999.7 -272.6M4.1 -475.1L3766.1 -107.9M117161.0 60238.3L3024.3 -270.5M13.5 -477.7L3746.8 -115.9M119026.9 60238.3L3049.0 -268.4M22.8 -480.2L3727.8 -123.8M120892.8 60238.3L3073.9 -266.2M32.1 -482.7L3709.2 -131.5M122758.7 60238.3L3098.9 -264.1M41.2 -485.2L3690.9 -139.1M124624.5 60238.3L3124.1 -261.9M50.3 -487.6L3673.0 -146.6M126490.4 60238.3L3149.4 -259.7M59.2 -490.0L3655.4 -153.9M128356.3 60238.3L3174.9 -257.5M68.1 -492.4L3638.1 -161.1M132088.1 60238.3L3226.4 -253.1M85.5 -497.2L3604.4 -175.1M133954.0 60238.3L3252.5 -250.8M94.1 -499.5L3588.0 -181.9M135819.9 60238.3L3278.6 -248.6M102.6 -501.8L3571.9 -188.6M137685.8 60238.3L3305.0 -246.3M111.0 -504.1L3556.1 -195.2M139551.6 60238.3L3331.5 -244.0M119.3 -506.3L3540.6 -201.6M141417.5 60238.3L3358.2 -241.7M127.5 -508.5L3525.3 -208.0M143283.4 60238.3L3385.0 -239.4M135.7 -510.7L3510.3 -214.3M145149.3 60238.3L3412.1 -237.1M143.8 -512.9L3495.5 -220.4M147015.2 60238.3L3439.3 -234.7M151.7 -515.1L3481.0 -226.4" stroke="#959aa1" stroke-width="1" fill="none"/>
<path d="M-184052.8 49345.2L159.7 -517.2M-184052.8 49345.2L-222871.4 60238.3M-205637.5 60238.3L261.1 -508.5M-25578.7 6449.6L-176453.6 60238.3M-186978.6 60238.3L366.8 -499.4M-12999.9 3044.8L-130035.8 60238.3M-168319.7 60238.3L477.0 -489.9M-8351.2 1786.5L-83618.1 60238.3M-149660.9 60238.3L591.9 -480.0M-5930.8 1131.3L-37200.3 60238.3M-131002.0 60238.3L712.0 -469.7M-4446.2 729.5L9217.4 60238.3M-112343.1 60238.3L837.4 -458.9M-3442.7 457.8L55635.2 60238.3M-93684.3 60238.3L968.7 -447.5M-2719.0 262.0L102053.0 60238.3M-75025.4 60238.3L1106.2 -435.7M-2172.4 114.0L148470.7 60238.3M-56366.5 60238.3L1250.3 -423.3M-1745.0 -1.7L20155.7 6707.8M-19048.8 60238.3L1560.8 -396.5M-1119.8 -170.9L8404.4 1821.0M-389.9 60238.3L1728.2 -382.1M-884.2 -234.7L6793.8 1151.2M18269.0 60238.3L1904.6 -366.9M-684.4 -288.8L5810.7 742.4M36927.8 60238.3L2090.7 -350.9M-512.7 -335.2L5148.3 466.9M55586.7 60238.3L2287.5 -334.0M-363.7 -375.6L4671.6 268.7M74245.6 60238.3L2495.7 -316.0M-233.2 -410.9L4312.1 119.2M92904.5 60238.3L2716.5 -297.0M-117.8 -442.1L4031.3 2.4M111563.3 60238.3L2951.0 -276.8M-15.1 -469.9L3806.0 -91.3M130222.2 60238.3L3200.6 -255.3M76.8 -494.8L3621.1 -168.2M148881.1 60238.3L3466.7 -232.4M159.7 -517.2L3466.7 -232.4M-1401.7 -94.6L839.0 462.4M-37707.6 60238.3L839.0 462.4" stroke="#7d8187" stroke-width="1" fill="none"/>
<path d="M839.0 462.4L11525.3 3118.8" stroke="#a04848" stroke-width="1.6" fill="none"/>
<path d="M839.0 462.4L1401.7 -410.2" stroke="#3a9a3a" stroke-width="1.6" fill="none" opacity="0.8"/>
<rect x="116.5" y="115.5" width="1432" height="832" fill="none" stroke="#8a8d92" stroke-width="1"/>
<path d="M1103.4 810.1L1226.0 846.4M1226.0 846.4L1309.8 784.1M1309.8 784.1L1189.8 750.2M1189.8 750.2L1103.4 810.1M1103.4 810.1L1309.8 784.1M1226.0 846.4L1189.8 750.2M1273.4 959.7L1232.1 851.5M1232.1 851.5L1315.8 788.9M1315.8 788.9L1273.4 959.7M1232.1 851.5L1295.6 870.3M1265.1 960.8L1224.3 852.4M1224.3 852.4L1101.2 815.8M1101.2 815.8L1265.1 960.8M1224.3 852.4L1179.9 885.4M740.2 702.5L848.1 734.5M848.1 734.5L939.2 679.6M939.2 679.6L833.1 649.7M833.1 649.7L740.2 702.5M740.2 702.5L939.2 679.6M848.1 734.5L833.1 649.7M870.1 833.7L852.9 738.9M852.9 738.9L943.9 683.8M943.9 683.8L965.4 772.3M965.4 772.3L870.1 833.7M870.1 833.7L943.9 683.8M852.9 738.9L965.4 772.3M862.1 834.7L845.3 739.7M845.3 739.7L737.0 707.5M737.0 707.5L862.1 834.7M845.3 739.7L797.2 768.8M875.1 838.7L970.6 777.0M970.6 777.0L1088.3 812.0M1088.3 812.0L875.1 838.7M970.6 777.0L982.5 825.2M1090.3 806.2L973.1 771.5M973.1 771.5L951.1 682.9M951.1 682.9L1061.7 714.1M1061.7 714.1L1090.3 806.2M1090.3 806.2L951.1 682.9M973.1 771.5L1061.7 714.1M953.5 678.0L1063.8 709.0M1063.8 709.0L1146.6 655.7M1146.6 655.7L1038.3 626.7M1038.3 626.7L953.5 678.0M953.5 678.0L1146.6 655.7M1063.8 709.0L1038.3 626.7M1097.9 805.2L1069.0 713.3M1069.0 713.3L1151.8 659.9M1151.8 659.9L1184.1 745.7M1184.1 745.7L1097.9 805.2M1097.9 805.2L1151.8 659.9M1069.0 713.3L1184.1 745.7M1311.2 778.6L1191.5 744.9M1191.5 744.9L1158.7 659.0M1158.7 659.0L1271.6 689.3M1271.6 689.3L1311.2 778.6M1311.2 778.6L1158.7 659.0M1191.5 744.9L1271.6 689.3M1160.5 654.2L1273.1 684.3M1273.1 684.3L1348.1 632.6M1348.1 632.6L1237.7 604.4M1237.7 604.4L1160.5 654.2M1160.5 654.2L1348.1 632.6M1273.1 684.3L1237.7 604.4M1318.6 777.5L1278.8 688.5M1278.8 688.5L1353.6 636.6M1353.6 636.6L1318.6 777.5M1278.8 688.5L1336.9 704.1M418.9 607.4L514.6 635.7M514.6 635.7L610.8 587.0M610.8 587.0L516.3 560.3M516.3 560.3L418.9 607.4M418.9 607.4L610.8 587.0M514.6 635.7L516.3 560.3M516.8 723.3L518.2 639.7M518.2 639.7L614.3 590.8M614.3 590.8L617.8 669.2M617.8 669.2L516.8 723.3M516.8 723.3L614.3 590.8M518.2 639.7L617.8 669.2M509.1 724.2L511.0 640.4M511.0 640.4L414.9 611.8M414.9 611.8L509.1 724.2M511.0 640.4L460.4 666.0M520.5 727.7L621.8 673.3M621.8 673.3L725.6 704.2M725.6 704.2L520.5 727.7M621.8 673.3L623.8 715.9M728.6 699.1L625.2 668.5M625.2 668.5L621.3 589.9M621.3 589.9L719.6 617.7M719.6 617.7L728.6 699.1M728.6 699.1L621.3 589.9M625.2 668.5L719.6 617.7M624.5 585.6L722.6 613.1M722.6 613.1L811.1 565.8M811.1 565.8L714.5 539.8M714.5 539.8L624.5 585.6M624.5 585.6L811.1 565.8M722.6 613.1L714.5 539.8M736.0 698.2L726.7 617.0M726.7 617.0L815.1 569.4M815.1 569.4L828.6 645.7M828.6 645.7L736.0 698.2M736.0 698.2L815.1 569.4M726.7 617.0L828.6 645.7M941.6 674.7L835.8 645.0M835.8 645.0L821.9 568.6M821.9 568.6L922.3 595.6M922.3 595.6L941.6 674.7M941.6 674.7L821.9 568.6M835.8 645.0L922.3 595.6M824.5 564.4L924.7 591.2M924.7 591.2L1006.0 545.1M1006.0 545.1L907.3 519.9M907.3 519.9L824.5 564.4M824.5 564.4L1006.0 545.1M924.7 591.2L907.3 519.9M948.8 673.8L929.2 594.9M929.2 594.9L1010.4 548.7M1010.4 548.7L1033.4 622.8M1033.4 622.8L948.8 673.8M948.8 673.8L1010.4 548.7M929.2 594.9L1033.4 622.8M1148.4 651.0L1040.3 622.1M1040.3 622.1L1017.0 547.9M1017.0 547.9L1119.4 574.1M1119.4 574.1L1148.4 651.0M1148.4 651.0L1017.0 547.9M1040.3 622.1L1119.4 574.1M1019.0 543.8L1121.2 569.9M1121.2 569.9L1195.6 525.0M1195.6 525.0L1095.1 500.5M1095.1 500.5L1019.0 543.8M1019.0 543.8L1195.6 525.0M1121.2 569.9L1095.1 500.5M1155.4 650.1L1126.1 573.5M1126.1 573.5L1200.4 528.5M1200.4 528.5L1232.3 600.6M1232.3 600.6L1155.4 650.1M1155.4 650.1L1200.4 528.5M1126.1 573.5L1232.3 600.6M1349.2 628.0L1239.1 599.9M1239.1 599.9L1206.8 527.8M1206.8 527.8L1311.2 553.3M1311.2 553.3L1349.2 628.0M1349.2 628.0L1206.8 527.8M1239.1 599.9L1311.2 553.3M1208.3 523.8L1312.4 549.1M1312.4 549.1L1380.2 505.5M1380.2 505.5L1278.0 481.6M1278.0 481.6L1208.3 523.8M1208.3 523.8L1380.2 505.5M1312.4 549.1L1278.0 481.6M1356.0 627.1L1317.7 552.6M1317.7 552.6L1385.4 508.9M1385.4 508.9L1356.0 627.1M1317.7 552.6L1371.2 565.7M207.4 629.7L312.6 581.4M312.6 581.4L404.8 608.8M404.8 608.8L207.4 629.7M312.6 581.4L306.8 619.2M408.6 604.3L316.6 577.1M316.6 577.1L327.2 507.0M327.2 507.0L415.0 531.8M415.0 531.8L408.6 604.3M408.6 604.3L327.2 507.0M316.6 577.1L415.0 531.8M204.7 625.8L309.5 577.7M309.5 577.7L320.4 507.7M320.4 507.7L204.7 625.8M309.5 577.7L264.8 564.5M331.0 503.1L418.7 527.7M418.7 527.7L511.2 485.3M511.2 485.3L424.5 462.1M424.5 462.1L331.0 503.1M331.0 503.1L511.2 485.3M418.7 527.7L424.5 462.1M415.7 603.5L421.8 531.2M421.8 531.2L514.3 488.6M514.3 488.6L512.8 556.8M512.8 556.8L415.7 603.5M415.7 603.5L514.3 488.6M421.8 531.2L512.8 556.8M614.0 582.6L519.7 556.1M519.7 556.1L520.9 487.9M520.9 487.9L610.9 512.0M610.9 512.0L614.0 582.6M614.0 582.6L520.9 487.9M519.7 556.1L610.9 512.0M524.1 484.1L613.9 508.1M613.9 508.1L699.8 466.8M699.8 466.8L611.1 444.1M611.1 444.1L524.1 484.1M524.1 484.1L699.8 466.8M613.9 508.1L611.1 444.1M620.9 581.8L617.5 511.4M617.5 511.4L703.2 470.0M703.2 470.0L710.6 536.4M710.6 536.4L620.9 581.8M620.9 581.8L703.2 470.0M617.5 511.4L710.6 536.4M813.7 561.5L717.3 535.8M717.3 535.8L709.6 469.3M709.6 469.3L801.5 492.8M801.5 492.8L813.7 561.5M813.7 561.5L709.6 469.3M717.3 535.8L801.5 492.8M712.3 465.6L804.0 489.0M804.0 489.0L883.5 448.8M883.5 448.8L793.0 426.7M793.0 426.7L712.3 465.6M712.3 465.6L883.5 448.8M804.0 489.0L793.0 426.7M820.5 560.7L808.0 492.3M808.0 492.3L887.3 451.9M887.3 451.9L903.1 516.5M903.1 516.5L820.5 560.7M820.5 560.7L887.3 451.9M808.0 492.3L903.1 516.5M1008.0 541.0L909.6 515.9M909.6 515.9L893.5 451.2M893.5 451.2L987.3 474.1M987.3 474.1L1008.0 541.0M1008.0 541.0L893.5 451.2M909.6 515.9L987.3 474.1M895.7 447.6L989.2 470.4M989.2 470.4L1062.5 431.2M1062.5 431.2L970.4 409.6M970.4 409.6L895.7 447.6M895.7 447.6L1062.5 431.2M989.2 470.4L970.4 409.6M1014.6 540.2L993.6 473.6M993.6 473.6L1066.8 434.2M1066.8 434.2L1090.5 497.2M1090.5 497.2L1014.6 540.2M1014.6 540.2L1066.8 434.2M993.6 473.6L1090.5 497.2M1197.1 521.0L1096.8 496.6M1096.8 496.6L1072.8 433.6M1072.8 433.6L1168.2 455.9M1168.2 455.9L1197.1 521.0M1197.1 521.0L1072.8 433.6M1096.8 496.6L1168.2 455.9M1074.5 430.1L1169.7 452.3M1169.7 452.3L1237.2 414.0M1237.2 414.0L1143.5 393.0M1143.5 393.0L1074.5 430.1M1074.5 430.1L1237.2 414.0M1169.7 452.3L1143.5 393.0M1203.5 520.3L1174.4 455.3M1174.4 455.3L1241.7 417.0M1241.7 417.0L1273.0 478.4M1273.0 478.4L1203.5 520.3M1203.5 520.3L1241.7 417.0M1174.4 455.3L1273.0 478.4M1381.2 501.6L1279.2 477.8M1279.2 477.8L1247.6 416.4M1247.6 416.4L1344.6 438.1M1344.6 438.1L1381.2 501.6M1381.2 501.6L1247.6 416.4M1279.2 477.8L1344.6 438.1M1248.9 412.9L1345.6 434.6M1345.6 434.6L1407.5 397.3M1407.5 397.3L1312.4 376.8M1312.4 376.8L1248.9 412.9M1248.9 412.9L1407.5 397.3M1345.6 434.6L1312.4 376.8M1387.4 500.9L1350.6 437.6M1350.6 437.6L1412.4 400.2M1412.4 400.2L1387.4 500.9M1350.6 437.6L1400.3 448.7M514.5 481.5L427.9 458.4M427.9 458.4L433.0 398.6M433.0 398.6L515.9 419.8M515.9 419.8L514.5 481.5M514.5 481.5L433.0 398.6M427.9 458.4L515.9 419.8M328.2 499.7L421.5 459.0M421.5 459.0L426.8 399.2M426.8 399.2L328.2 499.7M421.5 459.0L379.3 447.7M436.2 395.3L519.0 416.3M519.0 416.3L602.1 380.0M602.1 380.0L520.3 360.0M520.3 360.0L436.2 395.3M436.2 395.3L602.1 380.0M519.0 416.3L520.3 360.0M521.0 480.8L522.1 419.3M522.1 419.3L605.1 382.8M605.1 382.8L607.7 441.1M607.7 441.1L521.0 480.8M521.0 480.8L605.1 382.8M522.1 419.3L607.7 441.1M702.5 463.1L614.0 440.6M614.0 440.6L611.2 382.2M611.2 382.2L695.8 402.9M695.8 402.9L702.5 463.1M702.5 463.1L611.2 382.2M614.0 440.6L695.8 402.9M614.0 379.0L698.4 399.6M698.4 399.6L775.8 364.1M775.8 364.1L692.4 344.6M692.4 344.6L614.0 379.0M614.0 379.0L775.8 364.1M698.4 399.6L692.4 344.6M708.8 462.4L701.9 402.4M701.9 402.4L779.2 366.9M779.2 366.9L789.3 423.7M789.3 423.7L708.8 462.4M708.8 462.4L779.2 366.9M701.9 402.4L789.3 423.7M885.7 445.2L795.4 423.2M795.4 423.2L785.1 366.3M785.1 366.3L871.4 386.5M871.4 386.5L885.7 445.2M885.7 445.2L785.1 366.3M795.4 423.2L871.4 386.5M787.4 363.1L873.5 383.2M873.5 383.2L945.4 348.6M945.4 348.6L860.5 329.5M860.5 329.5L787.4 363.1M787.4 363.1L945.4 348.6M873.5 383.2L860.5 329.5M891.9 444.5L877.3 386.0M877.3 386.0L949.1 351.3M949.1 351.3L966.4 406.8M966.4 406.8L891.9 444.5M891.9 444.5L949.1 351.3M877.3 386.0L966.4 406.8M1064.3 427.7L972.4 406.2M972.4 406.2L954.9 350.7M954.9 350.7L1042.7 370.4M1042.7 370.4L1064.3 427.7M1064.3 427.7L954.9 350.7M972.4 406.2L1042.7 370.4M956.8 347.6L1044.4 367.2M1044.4 367.2L1111.1 333.4M1111.1 333.4L1024.7 314.8M1024.7 314.8L956.8 347.6M956.8 347.6L1111.1 333.4M1044.4 367.2L1024.7 314.8M1070.3 427.0L1048.5 369.9M1048.5 369.9L1115.1 336.0M1115.1 336.0L1139.1 390.2M1139.1 390.2L1070.3 427.0M1070.3 427.0L1115.1 336.0M1048.5 369.9L1139.1 390.2M1238.4 410.6L1145.0 389.7M1145.0 389.7L1120.7 335.5M1120.7 335.5L1210.0 354.7M1210.0 354.7L1238.4 410.6M1238.4 410.6L1120.7 335.5M1145.0 389.7L1210.0 354.7M1122.2 332.4L1211.2 351.6M1211.2 351.6L1272.9 318.6M1272.9 318.6L1185.2 300.4M1185.2 300.4L1122.2 332.4M1122.2 332.4L1272.9 318.6M1211.2 351.6L1185.2 300.4M1244.3 410.0L1215.7 354.2M1215.7 354.2L1277.2 321.2M1277.2 321.2L1307.7 374.0M1307.7 374.0L1244.3 410.0M1244.3 410.0L1277.2 321.2M1215.7 354.2L1307.7 374.0M1408.3 394.0L1313.4 373.6M1313.4 373.6L1282.7 320.6M1282.7 320.6L1373.3 339.4M1373.3 339.4L1408.3 394.0M1408.3 394.0L1282.7 320.6M1313.4 373.6L1373.3 339.4M1283.7 317.6L1374.2 336.3M1374.2 336.3L1431.0 304.1M1431.0 304.1L1283.7 317.6M1374.2 336.3L1357.7 310.8M1414.1 393.3L1378.9 338.9M1378.9 338.9L1435.6 306.6M1435.6 306.6L1414.1 393.3M1378.9 338.9L1425.2 348.5M604.9 376.8L523.2 356.9M523.2 356.9L524.1 305.2M524.1 305.2L602.5 323.6M602.5 323.6L604.9 376.8M604.9 376.8L524.1 305.2M523.2 356.9L602.5 323.6M433.5 392.4L517.2 357.3M517.2 357.3L518.4 305.8M518.4 305.8L433.5 392.4M517.2 357.3L477.4 347.6M526.9 302.3L605.2 320.6M605.2 320.6L680.5 289.1M680.5 289.1L603.1 271.7M603.1 271.7L526.9 302.3M526.9 302.3L680.5 289.1M605.2 320.6L603.1 271.7M610.9 376.2L608.3 323.1M608.3 323.1L683.5 291.6M683.5 291.6L689.1 342.0M689.1 342.0L610.9 376.2M610.9 376.2L683.5 291.6M608.3 323.1L689.1 342.0M778.2 360.9L694.9 341.5M694.9 341.5L689.1 291.0M689.1 291.0L768.9 309.0M768.9 309.0L778.2 360.9M778.2 360.9L689.1 291.0M694.9 341.5L768.9 309.0M691.5 288.2L771.2 306.1M771.2 306.1L841.6 275.3M841.6 275.3L762.8 258.3M762.8 258.3L691.5 288.2M691.5 288.2L841.6 275.3M771.2 306.1L762.8 258.3M784.0 360.3L774.6 308.5M774.6 308.5L844.9 277.7M844.9 277.7L856.9 327.0M856.9 327.0L784.0 360.3M784.0 360.3L844.9 277.7M774.6 308.5L856.9 327.0M947.3 345.5L862.6 326.5M862.6 326.5L850.3 277.2M850.3 277.2L931.6 294.7M931.6 294.7L947.3 345.5M947.3 345.5L850.3 277.2M862.6 326.5L931.6 294.7M852.3 274.4L933.5 291.9M933.5 291.9L999.1 261.8M999.1 261.8L919.0 245.2M919.0 245.2L852.3 274.4M852.3 274.4L999.1 261.8M933.5 291.9L919.0 245.2M953.1 344.9L937.1 294.3M937.1 294.3L1002.7 264.1M1002.7 264.1L1020.8 312.3M1020.8 312.3L953.1 344.9M953.1 344.9L1002.7 264.1M937.1 294.3L1020.8 312.3M1112.6 330.4L1026.4 311.8M1026.4 311.8L1008.0 263.6M1008.0 263.6L1090.6 280.8M1090.6 280.8L1112.6 330.4M1112.6 330.4L1008.0 263.6M1026.4 311.8L1090.6 280.8M1009.6 260.9L1092.1 278.0M1092.1 278.0L1153.1 248.6M1153.1 248.6L1009.6 260.9M1092.1 278.0L1081.7 254.7M1118.2 329.8L1096.0 280.3M1096.0 280.3L1157.0 250.9M1157.0 250.9L1181.0 298.0M1181.0 298.0L1118.2 329.8M1118.2 329.8L1157.0 250.9M1096.0 280.3L1181.0 298.0M1274.1 315.6L1186.5 297.5M1186.5 297.5L1162.3 250.4M1162.3 250.4L1274.1 315.6M1186.5 297.5L1216.7 282.2M682.9 286.3L605.6 269.0M605.6 269.0L603.4 224.0M603.4 224.0L677.8 240.0M677.8 240.0L682.9 286.3M682.9 286.3L603.4 224.0M605.6 269.0L677.8 240.0M524.2 299.8L600.1 269.4M600.1 269.4L598.1 224.4M598.1 224.4L524.2 299.8M600.1 269.4L562.3 261.0M605.9 221.4L680.1 237.4M680.1 237.4L748.8 209.9M748.8 209.9L675.4 194.6M675.4 194.6L605.9 221.4M605.9 221.4L748.8 209.9M680.1 237.4L675.4 194.6M688.5 285.8L683.1 239.6M683.1 239.6L751.8 212.0M751.8 212.0L759.6 256.0M759.6 256.0L688.5 285.8M688.5 285.8L751.8 212.0M683.1 239.6L759.6 256.0M843.6 272.5L765.0 255.6M765.0 255.6L757.0 211.6M757.0 211.6L832.6 227.2M832.6 227.2L843.6 272.5M843.6 272.5L757.0 211.6M765.0 255.6L832.6 227.2M759.0 209.1L834.5 224.7M834.5 224.7L898.9 197.8M898.9 197.8L759.0 209.1M834.5 224.7L829.3 203.4M849.0 272.0L837.8 226.9M837.8 226.9L902.2 199.9M902.2 199.9L915.5 243.0M915.5 243.0L849.0 272.0M849.0 272.0L902.2 199.9M837.8 226.9L915.5 243.0M1000.9 259.1L920.8 242.6M920.8 242.6L907.3 199.5M907.3 199.5L1000.9 259.1M920.8 242.6L952.9 228.5M751.0 207.4L677.7 192.2M677.7 192.2L673.1 152.6M673.1 152.6L751.0 207.4M677.7 192.2L711.1 179.4M603.2 219.2L672.5 192.6M672.5 192.6L668.1 153.0M668.1 153.0L603.2 219.2M672.5 192.6L636.6 185.2" stroke="#009600" stroke-width="2.0" fill="none" stroke-linecap="butt"/>
</svg>
<div class="a" style="left:117px;top:116px;width:91px;height:18px;background:#0b5cff;border-bottom-right-radius:2px"></div>
<div class="t" style="left:124.5px;top:118.8px;font-size:12px;font-weight:bold;letter-spacing:-0.2px;color:#fff">Perspective</div>
<div class="a" style="left:197px;top:118px;width:1px;height:14px;background:#fff"></div>
<div class="a" style="left:199px;top:123px;width:0;height:0;border-left:4px solid transparent;border-right:4px solid transparent;border-top:5px solid #fff"></div>
<svg class="a" style="left:140px;top:875px" width="60" height="50"><g stroke="#555" stroke-width="1" fill="none"><path d="M13 36.2V13.2M13 36.2L24.1 18.5M13 36.2L40.7 43.5"/></g><g font-family="Liberation Sans" font-size="12" fill="#555"><text x="15" y="15">z</text><text x="26" y="19">y</text><text x="43" y="44">x</text></g></svg>
<div class="a" style="left:1px;top:972px;width:14px;height:1px;background:#ddd"></div>
<!-- bottom tabs -->
<div class="a" style="left:113px;top:948px;width:1439px;height:20px;background:#424242"></div>
<div class="a" style="left:115px;top:948px;width:80px;height:20px;background:#2a2a2a;border:1px solid #9a9a9a;border-top:none;border-bottom-left-radius:5px;border-bottom-right-radius:5px"></div>
<div class="t" style="left:126px;top:953px;font-size:12px;color:#f2f2f2">Perspective</div>
<div class="t" style="left:202px;top:953px;font-size:12px;color:#9a9a9a">Top</div>
<div class="t" style="left:236px;top:953px;font-size:12px;color:#9a9a9a">Front</div>
<div class="t" style="left:279px;top:953px;font-size:12px;color:#9a9a9a">Right</div>
<div class="t" style="left:321px;top:951px;font-size:15px;color:#fff;font-weight:bold">+</div>
<!-- right panel -->
<div class="a" id="rp"></div>
<div class="t" style="left:1553px;top:117px;font-size:12px;color:#9c9c9c">Properties: Viewport</div>
<div class="a" style="left:1552px;top:132px;width:325px;height:1px;background:#484848"></div>
<div class="a" style="left:1558px;top:137px;width:28px;height:27px;background:#4a5e8c"></div>
<div class="a" style="left:1562px;top:144px;width:20px;height:14px;background:#1a1a1a;border-radius:3px;border:1px solid #aaa"></div><div class="a" style="left:1567px;top:146px;width:10px;height:10px;border-radius:50%;background:#555;border:2px solid #ccc"></div>
<div class="a" style="left:1593px;top:140px;width:22px;height:21px;background:#9fc8e8;border:1px solid #ddd"></div><div class="a" style="left:1596px;top:143px;width:16px;height:15px;background:#fff;border:2px solid #d81b1b"></div>
<svg class="a" style="left:1624px;top:138px" width="26" height="26"><circle cx="8" cy="19" r="5" fill="#2244bb"/><circle cx="15" cy="12" r="4.5" fill="#3355cc"/><circle cx="21" cy="6" r="3" fill="#6688ee"/><circle cx="7" cy="17" r="1.5" fill="#fff"/><circle cx="14" cy="10" r="1.3" fill="#fff"/></svg>
<div class="t ps" style="top:181.5px">Viewport</div>
<div class="a ssep" style="top:200px"></div>
<div class="t pl" style="top:206px">Title</div>
<div class="a pv" style="top:202px;height:19px"></div>
<div class="t pvt" style="top:205.7px">Perspective</div>
<div class="a sep" style="top:222px"></div>
<div class="t pl" style="top:227px">Width</div>
<div class="a pv" style="top:223px;height:19px"></div>
<div class="t pvt" style="top:226.7px">1431</div>
<div class="a" style="left:1872px;top:223px;width:1px;height:19px;background:#777"></div><svg class="a" style="left:1873px;top:224px" width="4" height="17"><path d="M0 6L2.5 3L5 6M0 11L2.5 14L5 11" stroke="#ccc" fill="none" stroke-width="1"/></svg>
<div class="a sep" style="top:243px"></div>
<div class="t pl" style="top:247px">Height</div>
<div class="a pv" style="top:243px;height:19px"></div>
<div class="t pvt" style="top:246.7px">831</div>
<div class="a" style="left:1872px;top:243px;width:1px;height:19px;background:#777"></div><svg class="a" style="left:1873px;top:244px" width="4" height="17"><path d="M0 6L2.5 3L5 6M0 11L2.5 14L5 11" stroke="#ccc" fill="none" stroke-width="1"/></svg>
<div class="a sep" style="top:263px"></div>
<div class="t pl" style="top:268px">Projection</div>
<div class="a pv" style="top:264px;height:19px"></div>
<div class="t pvt" style="top:267.7px">Perspective</div>
<svg class="a" style="left:1872px;top:269px" width="5" height="8"><path d="M0 2L3 5L6 2" stroke="#ddd" fill="none" stroke-width="1.2"/></svg>
<div class="a sep" style="top:284px"></div>
<div class="t pl" style="top:290px">Display mode</div>
<div class="a pv" style="top:286px;height:19px"></div>
<div class="t pvt" style="top:289.7px">Shaded</div>
<svg class="a" style="left:1872px;top:291px" width="5" height="8"><path d="M0 2L3 5L6 2" stroke="#ddd" fill="none" stroke-width="1.2"/></svg>
<div class="a sep" style="top:306px"></div>
<div class="t pl" style="top:311px">Locked</div>
<div class="a" style="left:1731px;top:309px;width:14px;height:14px;background:#5a5a5a;border:1px solid #777"></div>
<div class="a sep" style="top:327px"></div>
<div class="t ps" style="top:330.5px">Camera</div>
<div class="a ssep" style="top:349px"></div>
<div class="t pl" style="top:354px">Lens Length (mm)</div>
<div class="a pv" style="top:350px;height:19px"></div>
<div class="t pvt" style="top:353.7px">50.0</div>
<div class="a" style="left:1872px;top:350px;width:1px;height:19px;background:#777"></div><svg class="a" style="left:1873px;top:351px" width="4" height="17"><path d="M0 6L2.5 3L5 6M0 11L2.5 14L5 11" stroke="#ccc" fill="none" stroke-width="1"/></svg>
<div class="a sep" style="top:370px"></div>
<div class="t pl" style="top:374px">Rotation</div>
<div class="a pv" style="top:370px;height:19px"></div>
<div class="t pvt" style="top:373.7px">0.0</div>
<div class="a" style="left:1872px;top:370px;width:1px;height:19px;background:#777"></div><svg class="a" style="left:1873px;top:371px" width="4" height="17"><path d="M0 6L2.5 3L5 6M0 11L2.5 14L5 11" stroke="#ccc" fill="none" stroke-width="1"/></svg>
<div class="a sep" style="top:390px"></div>
<div class="t pl" style="top:394px">X Location</div>
<div class="a pv" style="top:390px;height:19px"></div>
<div class="t pvt" style="top:393.7px">12.585</div>
<div class="a" style="left:1872px;top:390px;width:1px;height:19px;background:#777"></div><svg class="a" style="left:1873px;top:391px" width="4" height="17"><path d="M0 6L2.5 3L5 6M0 11L2.5 14L5 11" stroke="#ccc" fill="none" stroke-width="1"/></svg>
<div class="a sep" style="top:410px"></div>
<div class="t pl" style="top:414px">Y Location</div>
<div class="a pv" style="top:410px;height:19px"></div>
<div class="t pvt" style="top:413.7px">-31.730</div>
<div class="a" style="left:1872px;top:410px;width:1px;height:19px;background:#777"></div><svg class="a" style="left:1873px;top:411px" width="4" height="17"><path d="M0 6L2.5 3L5 6M0 11L2.5 14L5 11" stroke="#ccc" fill="none" stroke-width="1"/></svg>
<div class="a sep" style="top:430px"></div>
<div class="t pl" style="top:434px">Z Location</div>
<div class="a pv" style="top:430px;height:19px"></div>
<div class="t pvt" style="top:433.7px">26.874</div>
<div class="a" style="left:1872px;top:430px;width:1px;height:19px;background:#777"></div><svg class="a" style="left:1873px;top:431px" width="4" height="17"><path d="M0 6L2.5 3L5 6M0 11L2.5 14L5 11" stroke="#ccc" fill="none" stroke-width="1"/></svg>
<div class="a sep" style="top:450px"></div>
<div class="t pl" style="top:454px">Distance to Target</div>
<div class="a pv" style="top:450px;height:19px"></div>
<div class="t pvt" style="top:453.7px">221.100</div>
<div class="a sep" style="top:470px"></div>
<div class="t pl" style="top:477px">Location</div>
<div class="a" style="left:1730px;top:471px;width:150px;height:23px;border:1px solid #9a9a9a;background:#323232"></div>
<div class="t" style="left:1788.5px;top:477.2px;font-size:11.5px;color:#eee">Place...</div>
<div class="a sep" style="top:495px"></div>
<div class="t ps" style="top:499.5px">Target</div>
<div class="a ssep" style="top:518px"></div>
<div class="t pl" style="top:523px">X Target</div>
<div class="a pv" style="top:519px;height:19px"></div>
<div class="t pvt" style="top:522.7px">-50.121</div>
<div class="a" style="left:1872px;top:519px;width:1px;height:19px;background:#777"></div><svg class="a" style="left:1873px;top:520px" width="4" height="17"><path d="M0 6L2.5 3L5 6M0 11L2.5 14L5 11" stroke="#ccc" fill="none" stroke-width="1"/></svg>
<div class="a sep" style="top:539px"></div>
<div class="t pl" style="top:543px">Y Target</div>
<div class="a pv" style="top:539px;height:19px"></div>
<div class="t pvt" style="top:542.7px">124.264</div>
<div class="a" style="left:1872px;top:539px;width:1px;height:19px;background:#777"></div><svg class="a" style="left:1873px;top:540px" width="4" height="17"><path d="M0 6L2.5 3L5 6M0 11L2.5 14L5 11" stroke="#ccc" fill="none" stroke-width="1"/></svg>
<div class="a sep" style="top:559px"></div>
<div class="t pl" style="top:563px">Z Target</div>
<div class="a pv" style="top:559px;height:19px"></div>
<div class="t pvt" style="top:562.7px">-116.720</div>
<div class="a" style="left:1872px;top:559px;width:1px;height:19px;background:#777"></div><svg class="a" style="left:1873px;top:560px" width="4" height="17"><path d="M0 6L2.5 3L5 6M0 11L2.5 14L5 11" stroke="#ccc" fill="none" stroke-width="1"/></svg>
<div class="a sep" style="top:579px"></div>
<div class="t pl" style="top:586px">Location</div>
<div class="a" style="left:1730px;top:580px;width:150px;height:23px;border:1px solid #9a9a9a;background:#323232"></div>
<div class="t" style="left:1788.5px;top:586.2px;font-size:11.5px;color:#eee">Place...</div>
<div class="a sep" style="top:604px"></div>
<div class="t ps" style="top:608.5px">Wallpaper</div>
<div class="a ssep" style="top:627px"></div>
<div class="t pl" style="top:635px">Filename</div>
<div class="a pv" style="top:630px;height:21px;width:129px;background:#575757;border:1px solid #6a6a6a"></div>
<div class="t pvt" style="top:634px;color:#b0b0b0">(none)</div>
<div class="a" style="left:1861px;top:630px;width:16px;height:21px;background:#3a3a3a;border:1px solid #6a6a6a"></div><div class="t" style="left:1866px;top:634px;font-size:11px;color:#ddd">...</div>
<div class="a sep" style="top:651px"></div>
<div class="t pl" style="top:658px">Show</div>
<div class="a" style="left:1731px;top:656px;width:14px;height:14px;background:#5a5a5a;border:1px solid #777"></div>
<svg class="a" style="left:1732px;top:657px" width="12" height="12"><path d="M2 6.5L5 9.5L10.5 2.5" stroke="#fff" stroke-width="1.8" fill="none"/></svg>
<div class="a sep" style="top:674px"></div>
<div class="t pl" style="top:678px">Gray</div>
<div class="a" style="left:1731px;top:676px;width:14px;height:14px;background:#5a5a5a;border:1px solid #777"></div>
<svg class="a" style="left:1732px;top:677px" width="12" height="12"><path d="M2 6.5L5 9.5L10.5 2.5" stroke="#fff" stroke-width="1.8" fill="none"/></svg>
<div class="a sep" style="top:694px"></div>
<!-- D5 -->
<div class="a" style="left:1336px;top:47px;width:191px;height:65px;background:#3a3a3a;border:1px solid #6e6e6e;border-radius:3px"></div>
<div class="a" style="left:1341px;top:49px;width:103px;height:21px;background:#2c2c2c;border-top-right-radius:5px"></div>
<div class="a" style="left:1341px;top:69px;width:181px;height:38px;background:#2e2e2e"></div>
<svg class="a" style="left:1336px;top:47px" width="191" height="65"><circle cx="22.5" cy="11.5" r="6.5" fill="#7a40f0"/><path d="M20 8.5H24L26 11L24 14H21.5V15.5L20 16Z" fill="#fff"/><circle cx="25.5" cy="17" r="2" fill="none" stroke="#b02ad0" stroke-width="1"/><circle cx="18.5" cy="35" r="10" fill="#7a40f0"/><path d="M14.5 29.5H21L24 34L21 38.5H17.5V41L14.5 42.5Z" fill="#fff"/><path d="M17 32H20L21.5 34L20 36H17Z" fill="#6a3af0"/><circle cx="23.5" cy="41.5" r="3.6" fill="#2e2e2e" stroke="#c030e0" stroke-width="1.3"/><g fill="none" stroke="#e8e8e8" stroke-width="1.4"><path d="M39 30.5L46.5 26.5L54 30.5V40.5L46.5 44.5L39 40.5Z M39 30.5L46.5 34.5L54 30.5 M46.5 34.5V44.5"/><rect x="92" y="29.5" width="17" height="13" rx="1"/><path d="M109 33.5L114.5 30.5V41.5L109 38.5"/><path d="M122 30H125L127 27H134L136 30H139V44H122Z"/><circle cx="130.5" cy="36.5" r="3.2"/><path d="M152 41Q146 33 152 28Q158.5 23 165 28Q171 33 165 41"/><path d="M155.5 33L158.5 36.5L161.5 33M158.5 36.5V40"/></g><path d="M156 43H161L158.5 46Z" fill="#fff"/><path d="M52 42.5H58M136 44.5H142M163 41H168" stroke="#9b6ce0" stroke-width="1.6"/><path d="M98 36H104M98 36L100 34.5M104 36L102 37.5" stroke="#9b6ce0" stroke-width="1.3" fill="none"/><circle cx="74.5" cy="35.5" r="3.5" fill="#eee"/><circle cx="74.5" cy="35.5" r="8.5" fill="none" stroke="#9b6ce0" stroke-width="2" stroke-dasharray="12 1.4"/><g transform="translate(161.8 12.5)"><rect x="-1.3" y="-6" width="2.6" height="3" fill="#bdbdbd" transform="rotate(0)"/><rect x="-1.3" y="-6" width="2.6" height="3" fill="#bdbdbd" transform="rotate(45)"/><rect x="-1.3" y="-6" width="2.6" height="3" fill="#bdbdbd" transform="rotate(90)"/><rect x="-1.3" y="-6" width="2.6" height="3" fill="#bdbdbd" transform="rotate(135)"/><rect x="-1.3" y="-6" width="2.6" height="3" fill="#bdbdbd" transform="rotate(180)"/><rect x="-1.3" y="-6" width="2.6" height="3" fill="#bdbdbd" transform="rotate(225)"/><rect x="-1.3" y="-6" width="2.6" height="3" fill="#bdbdbd" transform="rotate(270)"/><rect x="-1.3" y="-6" width="2.6" height="3" fill="#bdbdbd" transform="rotate(315)"/><circle r="4.3" fill="#bdbdbd"/><circle r="1.7" fill="#3a3a3a"/></g><path d="M177 10L181 14M181 10L177 14" stroke="#6a6a6a" stroke-width="1.6"/></svg>
<div class="t" style="left:1372px;top:53px;font-size:11.6px;color:#f0f0f0">D5 LiveSync</div>
<!-- osnap -->
<div class="a" style="left:0;top:541px;width:113px;height:3px;background:#3c3c3c"></div>
<div class="t" style="left:-2px;top:546px;font-size:11.6px;color:#9b9b9b">Osnap</div>
<svg class="a" style="left:93px;top:544px" width="20" height="18"><g transform="translate(10.3 8.8)"><rect x="-1.5" y="-6.6" width="3" height="3.2" fill="#d8d8d8" transform="rotate(0)"/><rect x="-1.5" y="-6.6" width="3" height="3.2" fill="#d8d8d8" transform="rotate(45)"/><rect x="-1.5" y="-6.6" width="3" height="3.2" fill="#d8d8d8" transform="rotate(90)"/><rect x="-1.5" y="-6.6" width="3" height="3.2" fill="#d8d8d8" transform="rotate(135)"/><rect x="-1.5" y="-6.6" width="3" height="3.2" fill="#d8d8d8" transform="rotate(180)"/><rect x="-1.5" y="-6.6" width="3" height="3.2" fill="#d8d8d8" transform="rotate(225)"/><rect x="-1.5" y="-6.6" width="3" height="3.2" fill="#d8d8d8" transform="rotate(270)"/><rect x="-1.5" y="-6.6" width="3" height="3.2" fill="#d8d8d8" transform="rotate(315)"/><circle r="4.6" fill="#d8d8d8"/><circle r="1.9" fill="#313131"/></g></svg>
<div class="a" style="left:0;top:562px;width:113px;height:19px;background:#3d3d3d"></div>
<div class="a" style="left:0;top:562px;width:32px;height:19px;background:#2c2c2c;border-top-right-radius:5px"></div>
<svg class="a" style="left:5px;top:564px" width="16" height="16"><circle cx="8" cy="8" r="6" fill="none" stroke="#ccc" stroke-width="1.2"/><circle cx="7" cy="8" r="1.5" fill="none" stroke="#ccc"/><path d="M8.5 8H14" stroke="#ccc"/></svg>
<svg class="a" style="left:41px;top:564px" width="16" height="16"><path d="M3 4L13 4L9 9L9 14L7 14L7 9Z" fill="#bbb"/><path d="M12 1H15V4M1 12V15H4" stroke="#ddd" stroke-width="0.9" fill="none"/></svg>
<div class="a cb" style="top:586px"></div>
<div class="t os" style="top:587px;color:#9b9b9b">End</div>
<div class="a cb" style="top:602px"></div>
<div class="t os" style="top:603px;color:#9b9b9b">Near</div>
<div class="a cb" style="top:618px"></div>
<div class="t os" style="top:619px;color:#9b9b9b">Point</div>
<div class="a cb" style="top:634px"></div>
<div class="t os" style="top:635px;color:#9b9b9b">Mid</div>
<div class="a cb" style="top:650px"></div>
<div class="t os" style="top:651px;color:#9b9b9b">Cen</div>
<div class="a cb" style="top:666px"></div>
<div class="t os" style="top:667px;color:#9b9b9b">Int</div>
<div class="a cb" style="top:682px"></div>
<div class="t os" style="top:683px;color:#9b9b9b">Perp</div>
<div class="a cb" style="top:698px"></div>
<div class="t os" style="top:699px;color:#9b9b9b">Tan</div>
<div class="a cb" style="top:714px"></div>
<div class="t os" style="top:715px;color:#9b9b9b">Quad</div>
<div class="a cb" style="top:730px"></div>
<div class="t os" style="top:731px;color:#9b9b9b">Knot</div>
<div class="a cb" style="top:746px"></div>
<div class="t os" style="top:747px;color:#9b9b9b">Vertex</div>
<div class="a cb" style="top:762px"></div>
<div class="t os" style="top:763px;color:#9b9b9b">Project</div>
<div class="a cb" style="top:779px"></div>
<div class="t os" style="top:780px;color:#f2f2f2">Disable</div>
<svg class="a" style="left:0;top:780px" width="12" height="12"><path d="M1.5 6.5L4.5 9.5L10.5 2.5" stroke="#fff" stroke-width="1.8" fill="none"/></svg>
<!-- bottom strip -->
<div class="a" style="left:451px;top:970px;width:16px;height:3px;background:#eee;border-top:1px solid #fff"></div>
<div class="a" style="left:452px;top:971px;width:14px;height:2px;background:#c01818"></div>
<div class="a" style="left:640px;top:969px;width:71px;height:4px;background:#45598f;border-radius:2px 2px 0 0"></div>
<div class="a" style="left:872px;top:969px;width:80px;height:4px;background:#45598f;border-radius:2px 2px 0 0"></div>
<div class="a" style="left:1323px;top:969px;width:44px;height:4px;background:#45598f;border-radius:2px 2px 0 0"></div>
</body></html>
